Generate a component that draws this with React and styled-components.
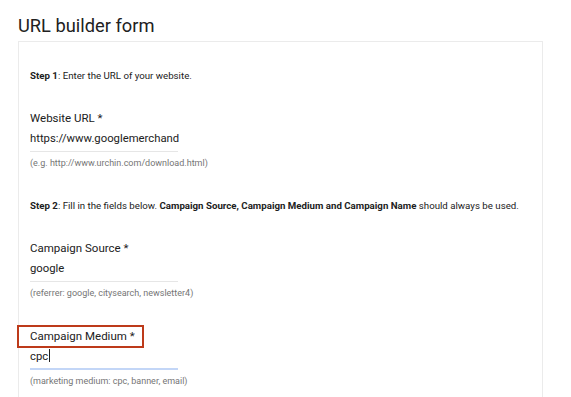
import React from "react";
import styled, { createGlobalStyle } from "styled-components";

const GlobalStyle = createGlobalStyle`
  html, body {
    margin: 0;
    padding: 0;
    background: #ffffff;
    font-family: Roboto, "Liberation Sans", Arial, sans-serif;
    color: #212121;
  }
`;

const Page = styled.div`
  padding: 15px 0 0 18px;
  width: 525px;
  height: 382px;
  overflow: hidden;
`;

const Title = styled.h1`
  margin: 0 0 5px 0;
  font-size: 18.3px;
  font-weight: 400;
  line-height: 21px;
  color: #212121;
`;

const Panel = styled.div`
  border: 1px solid #ebebeb;
  border-bottom: none;
  padding: 27px 0 0 11px;
  height: 400px;
`;

const StepText = styled.p`
  margin: ${(p) => p.$top || 0}px 0 27px 0;
  font-size: 9.7px;
  line-height: 14px;
  color: #212121;
  b {
    font-weight: 700;
  }
`;

const Field = styled.div`
  display: flex;
  flex-direction: column;
  align-items: flex-start;
  margin-bottom: 29px;
`;

const Label = styled.label`
  font-size: 11.5px;
  line-height: 17px;
  color: #212121;
  ${(p) =>
    p.$highlight &&
    `
    margin: -3px 0 -3px -13px;
    padding: 1px 7px 1px 11px;
    border: 2px solid #bd3a1a;
  `}
`;

const InputLine = styled.div`
  width: 148px;
  margin-top: 3px;
  padding-bottom: ${(p) => (p.$focused ? "3px" : "4px")};
  border-bottom: ${(p) => (p.$focused ? "2px solid #c3d6f7" : "1px solid #e6e6e6")};
  font-size: 11.3px;
  line-height: 17px;
  color: #212121;
  white-space: nowrap;
`;

const Caret = styled.span`
  display: inline-block;
  width: 1px;
  height: 13px;
  margin-left: 1px;
  background: #212121;
  vertical-align: -2px;
`;

const Hint = styled.div`
  margin-top: 5px;
  font-size: 9px;
  line-height: 12px;
  color: #757575;
`;

function FormField({ label, value, hint, highlight, focused }) {
  return (
    <Field>
      <Label $highlight={highlight}>{label}</Label>
      <InputLine $focused={focused}>
        {value}
        {focused && <Caret />}
      </InputLine>
      <Hint>{hint}</Hint>
    </Field>
  );
}

export default function App() {
  return (
    <>
      <GlobalStyle />
      <Page>
        <Title>URL builder form</Title>
        <Panel>
          <StepText>
            <b>Step 1</b>: Enter the URL of your website.
          </StepText>
          <FormField
            label="Website URL *"
            value="https://www.googlemerchand"
            hint="(e.g. http://www.urchin.com/download.html)"
          />
          <StepText $top={30}>
            <b>Step 2</b>: Fill in the fields below.{" "}
            <b>Campaign Source, Campaign Medium and Campaign Name</b> should
            always be used.
          </StepText>
          <FormField
            label="Campaign Source *"
            value="google"
            hint="(referrer: google, citysearch, newsletter4)"
          />
          <FormField
            label="Campaign Medium *"
            value="cpc"
            hint="(marketing medium: cpc, banner, email)"
            highlight
            focused
          />
        </Panel>
      </Page>
    </>
  );
}
